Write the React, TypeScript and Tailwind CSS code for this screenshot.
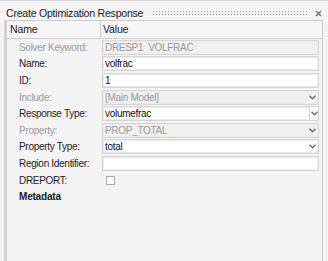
import React from "react";

const Chevron = () => (
  <svg width="7" height="5" viewBox="0 0 7 5" className="block">
    <path d="M0.5 0.8 L3.5 3.8 L6.5 0.8" fill="none" stroke="#6b6b6b" strokeWidth="1.4" />
  </svg>
);

type Row = {
  label: string;
  value?: string;
  disabled?: boolean;
  kind: "text" | "select" | "combo" | "check";
};

const rows: Row[] = [
  { label: "Solver Keyword:", value: "DRESP1  VOLFRAC", disabled: true, kind: "text" },
  { label: "Name:", value: "volfrac", kind: "text" },
  { label: "ID:", value: "1", kind: "text" },
  { label: "Include:", value: "[Main Model]", disabled: true, kind: "select" },
  { label: "Response Type:", value: "volumefrac", kind: "combo" },
  { label: "Property:", value: "PROP_TOTAL", disabled: true, kind: "select" },
  { label: "Property Type:", value: "total", kind: "select" },
  { label: "Region Identifier:", value: "", kind: "text" },
  { label: "DREPORT:", kind: "check" },
];

export default function App() {
  return (
    <div className="w-[328px] h-[261px] bg-[#f4f4f4] overflow-hidden border-t border-[#d6d6d6] font-['Liberation_Sans',Arial,sans-serif] text-[#1b1b1b] flex flex-col">
      <div className="h-[19px] flex items-center pt-[5px] pl-[6px] pr-[6px] shrink-0">
        <span className="text-[10.6px] tracking-[-0.25px] leading-none whitespace-nowrap">
          Create Optimization Response
        </span>
        <div className="flex-1 ml-[9px] mr-[8px] h-[6px] bg-[radial-gradient(circle,#9c9c9c_0.7px,transparent_0.9px)] bg-[length:3px_3px]" />
        <svg width="7" height="7" viewBox="0 0 7 7" className="block">
          <path d="M1 1 L6 6 M6 1 L1 6" stroke="#6e6e6e" strokeWidth="1.3" />
        </svg>
      </div>
      <div className="ml-[4px] mr-[5px] flex-1 border border-b-0 border-[#cbcbcb] border-l-[3px] border-l-[#d2d2d2] flex flex-col">
        <div className="h-[18px] flex border-b border-[#d0d0d0] bg-[#f6f6f6] text-[10.6px] tracking-[-0.2px] shrink-0">
          <div className="w-[94px] pl-[3px] flex items-center border-r border-[#d0d0d0]">Name</div>
          <div className="flex-1 pl-[2px] flex items-center">Value</div>
        </div>
        <div className="flex flex-col pr-[3px] text-[10px] tracking-[-0.3px]">
          {rows.map((r) => (
            <div key={r.label} className="h-[16.6px] flex items-center">
              <div
                className={`w-[95px] pl-[12px] whitespace-nowrap ${
                  r.disabled ? "text-[#9a9a9a]" : "text-[#1b1b1b]"
                }`}
              >
                {r.label}
              </div>
              {r.kind === "check" ? (
                <div className="flex-1 pl-[4px] flex items-center">
                  <div className="w-[9px] h-[9px] border border-[#a8a8a8] bg-white" />
                </div>
              ) : (
                <div
                  className={`flex-1 h-[15px] flex items-center border border-[#d5d5d5] shadow-[inset_0_0_0_1px_#ececec] ${
                    r.disabled ? "bg-[#f0f0f0] text-[#9a9a9a]" : "bg-white text-[#111]"
                  }`}
                >
                  <span className="flex-1 pl-[2px] whitespace-pre">{r.value}</span>
                  {r.kind === "select" && (
                    <div className="w-[10px] flex items-center justify-center mr-[1px]">
                      <Chevron />
                    </div>
                  )}
                  {r.kind === "combo" && (
                    <div className="w-[9px] self-stretch flex items-center justify-center border-l border-[#d5d5d5] bg-white">
                      <Chevron />
                    </div>
                  )}
                </div>
              )}
            </div>
          ))}
          <div className="h-[17px] flex items-center pl-[12px] font-bold text-[10px] tracking-[-0.2px]">
            Metadata
          </div>
        </div>
      </div>
    </div>
  );
}
